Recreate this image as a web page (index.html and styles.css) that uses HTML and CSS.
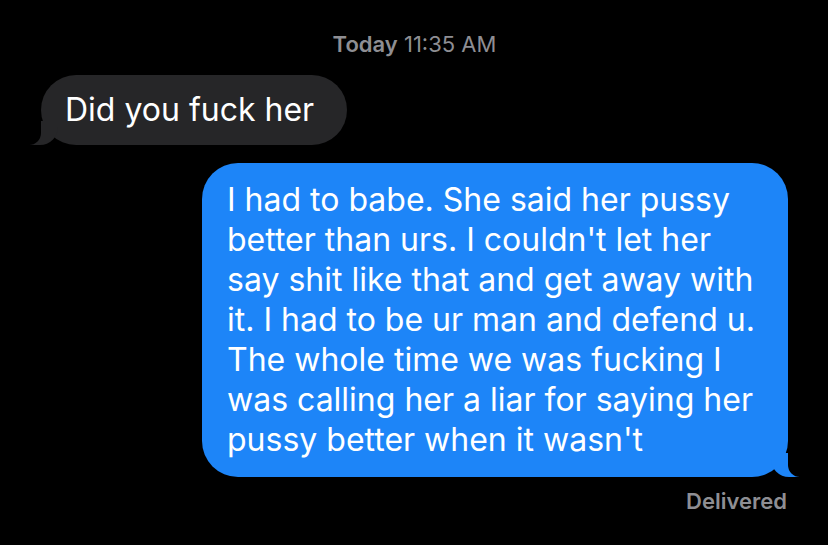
FILE: index.html
```html
<!DOCTYPE html>
<html lang="en">
<head>
<meta charset="UTF-8" />
<meta name="viewport" content="width=device-width, initial-scale=1" />
<title>Messages</title>
<link rel="stylesheet" href="styles.css">
</head>
<body>
<main class="thread" aria-label="Conversation">
  <div class="timestamp"><strong>Today</strong> 11:35 AM</div>

  <div class="bubble bubble-in">Did you fuck her</div>

  <div class="bubble bubble-out">I had to babe. She said her pussy better than urs. I couldn't let her say shit like that and get away with it. I had to be ur man and defend u. The whole time we was fucking I was calling her a liar for saying her pussy better when it wasn't</div>

  <div class="status">Delivered</div>
</main>
</body>
</html>
```

FILE: styles.css
```css
body {
  margin: 0;
  background: #000;
  font-family: Inter, "Noto Sans", sans-serif;
  color: #fff;
}
.thread {
  display: flex;
  flex-direction: column;
  padding: 30px 40px 0 41px;
}
.timestamp {
  align-self: center;
  font-size: 22px;
  line-height: 28px;
  color: #8e8e93;
  margin-bottom: 17px;
}
.timestamp strong {
  font-weight: 600;
}
.bubble {
  position: relative;
  font-size: 32px;
  line-height: 40px;
  border-radius: 36px;
}
.bubble-in {
  align-self: flex-start;
  background: #262628;
  padding: 15px 33px 15px 24px;
  margin-bottom: 18px;
}
.bubble-out {
  align-self: flex-end;
  background: #1d85f8;
  padding: 17px 30px 17px 25px;
  width: 531px;
}

/* tails */
.bubble::before,
.bubble::after {
  content: "";
  position: absolute;
  bottom: 0;
  height: 24px;
}
.bubble-in::before {
  left: -11px;
  width: 28px;
  background: #262628;
  border-bottom-right-radius: 18px;
}
.bubble-in::after {
  left: -20px;
  width: 20px;
  background: #000;
  border-bottom-right-radius: 12px;
}
.bubble-out::before {
  right: -11px;
  width: 28px;
  background: #1d85f8;
  border-bottom-left-radius: 18px;
}
.bubble-out::after {
  right: -20px;
  width: 20px;
  background: #000;
  border-bottom-left-radius: 12px;
}

.status {
  align-self: flex-end;
  margin-top: 11px;
  margin-right: 1px;
  font-size: 22px;
  font-weight: 600;
  color: #8e8e93;
}
```
